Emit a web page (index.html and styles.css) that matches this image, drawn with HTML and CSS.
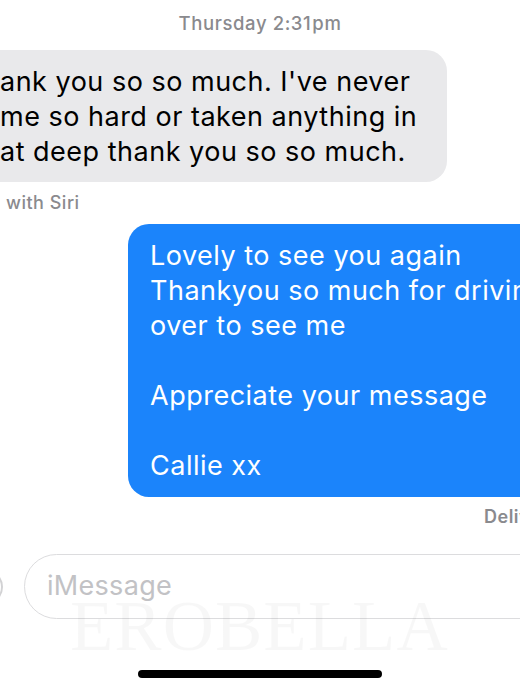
FILE: index.html
```html
<!DOCTYPE html>
<html>
<head>
<meta charset="utf-8">
<link rel="stylesheet" href="styles.css">
</head>
<body>
<div class="screen">
  <div class="timestamp">Thursday 2:31<span class="pm">pm</span></div>

  <div class="bubble received">ank you so so much. I've never<br>me so hard or taken anything in<br>at deep thank you so so much.</div>
  <div class="note siri">with Siri</div>

  <div class="bubble sent">Lovely to see you again<br>Thankyou so much for driving<br>over to see me<br><br>Appreciate your message<br><br>Callie xx</div>
  <div class="note delivered">Delivered</div>

  <div class="composer">
    <div class="apps"></div>
    <div class="input">iMessage</div>
  </div>

  <div class="home-bar"></div>
  <div class="watermark">EROBELLA</div>
</div>
</body>
</html>
```

FILE: styles.css
```css
html, body {
  margin: 0;
  padding: 0;
  background: #ffffff;
}

.screen {
  position: relative;
  width: 520px;
  height: 692px;
  overflow: hidden;
  font-family: "Inter", "Noto Sans", sans-serif;
  display: flex;
  flex-direction: column;
  align-items: flex-start;
}

.timestamp {
  align-self: stretch;
  text-align: center;
  padding-top: 12px;
  font-size: 18.5px;
  line-height: 22px;
  letter-spacing: 0.6px;
  font-weight: 500;
  color: #8a8a8e;
}

.timestamp .pm {
  margin-left: 1px;
}

.bubble {
  font-size: 27px;
  line-height: 35px;
  letter-spacing: 0.5px;
  white-space: nowrap;
  border-radius: 21px;
  flex-shrink: 0;
}

.received {
  margin-top: 16px;
  margin-left: -40px;
  width: 487px;
  box-sizing: border-box;
  padding: 14px 0 13px 40px;
  background: #e9e9eb;
  color: #000000;
}

.note {
  font-size: 18px;
  line-height: 22px;
  letter-spacing: 0.5px;
  color: #8a8a8e;
  white-space: nowrap;
}

.siri {
  margin-top: 10px;
  padding-left: 6px;
  font-weight: 500;
}

.sent {
  margin-top: 10px;
  margin-left: 128px;
  width: 460px;
  box-sizing: border-box;
  padding: 14px 0 14px 22px;
  background: #1b84fb;
  color: #ffffff;
}

.delivered {
  margin-top: 9px;
  padding-left: 484px;
  font-weight: 600;
}

.composer {
  margin-top: 26px;
  display: flex;
  align-items: center;
  gap: 21px;
  margin-left: -33px;
}

.apps {
  width: 36px;
  height: 36px;
  border-radius: 50%;
  border: 2px solid #d2d2d4;
  box-sizing: border-box;
  flex-shrink: 0;
}

.input {
  width: 560px;
  height: 65px;
  box-sizing: border-box;
  border: 1.5px solid #dcdcde;
  border-radius: 33px;
  padding-left: 22px;
  font-size: 27px;
  line-height: 62px;
  letter-spacing: 0.3px;
  color: #c2c2c5;
  flex-shrink: 0;
}

.home-bar {
  margin-top: 51px;
  margin-left: 138px;
  width: 244px;
  height: 8px;
  border-radius: 4px;
  background: #000000;
}

.watermark {
  position: absolute;
  left: 70px;
  top: 586px;
  font-family: "Liberation Serif", "Times New Roman", serif;
  font-size: 71px;
  line-height: 80px;
  letter-spacing: 1px;
  color: rgba(0, 0, 0, 0.03);
  pointer-events: none;
}
```
